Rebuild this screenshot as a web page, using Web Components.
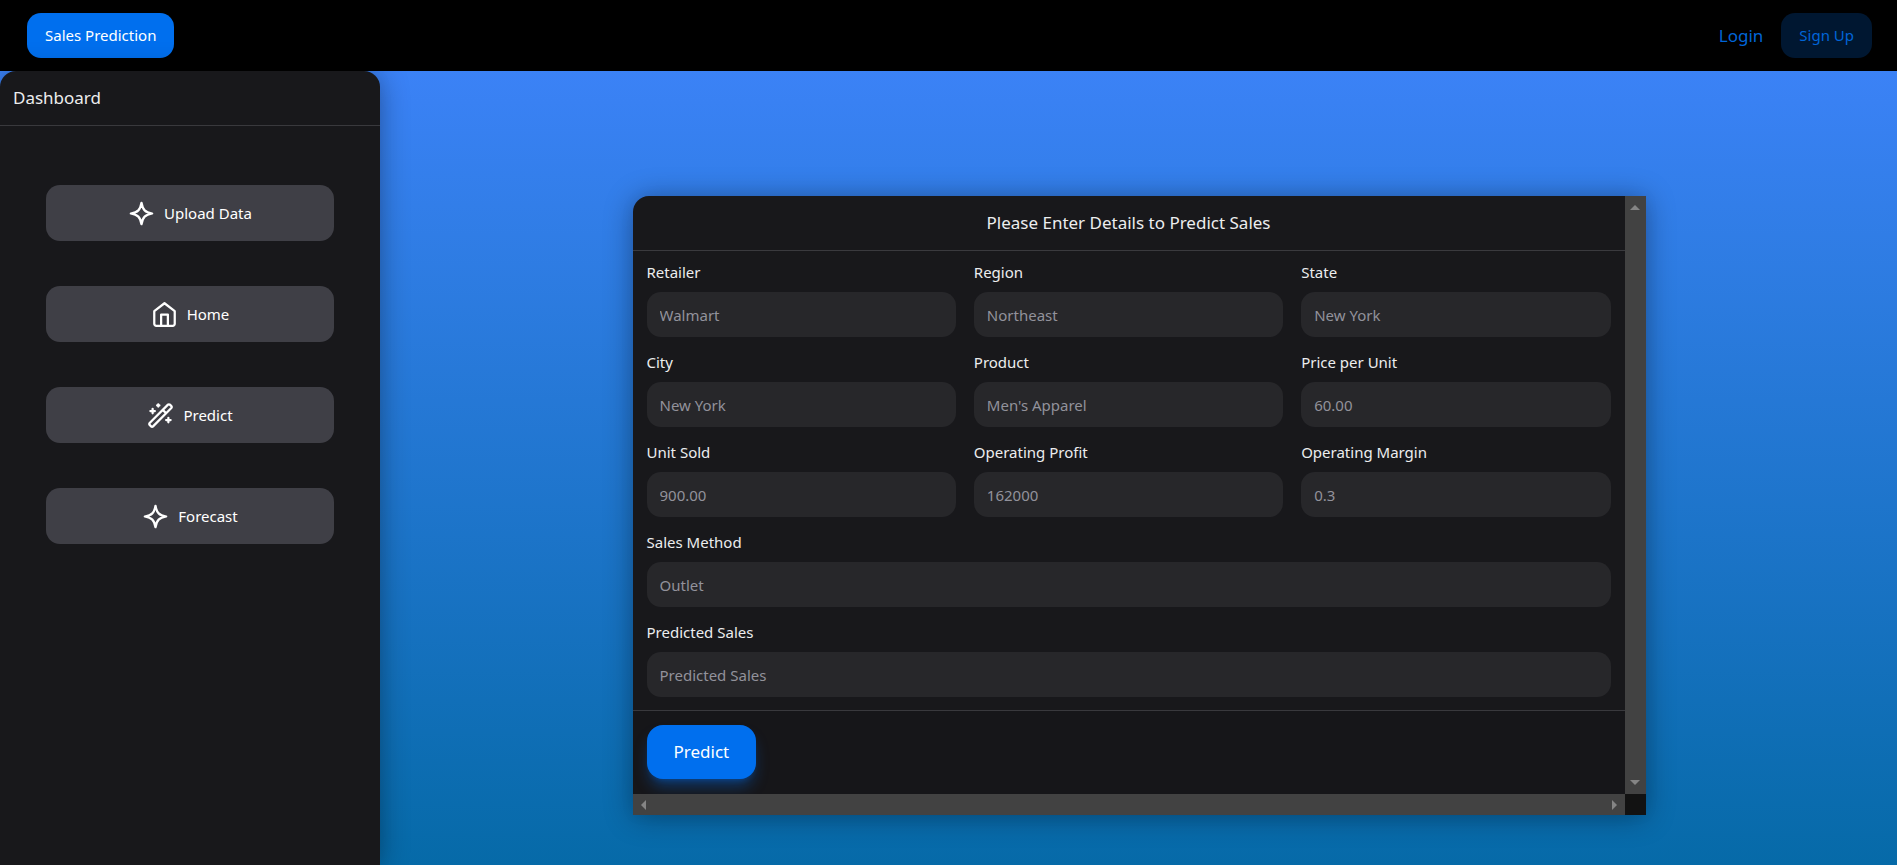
<!DOCTYPE html>
<html lang="en">
<head>
<meta charset="utf-8">
<title>Sales Prediction</title>
<style>
html,body{margin:0;min-height:100vh;background:#000}
body{font-family:"Noto Sans","Open Sans",sans-serif;font-size:15px;line-height:24px;color:#ecedee;display:flex}
sales-app{flex:1}
</style>
</head>
<body>
<sales-app></sales-app>
<script>
const define = (name, html, setup) => {
  const template = document.createElement('template');
  template.innerHTML = '<style>*{box-sizing:border-box}button,input{font:inherit;border:0;margin:0}</style>' + html;
  customElements.define(name, class extends HTMLElement {
    constructor() {
      super();
      this.attachShadow({mode: 'open'}).append(template.content.cloneNode(true));
    }
    connectedCallback() { if (setup) setup(this, this.shadowRoot); }
  });
};

const icons = {
  sparkle: '<path d="M12 2.5c1.100 6.300 3.200 8.400 9.500 9.500-6.300 1.100-8.400 3.200-9.500 9.500-1.100-6.300-3.200-8.400-9.500-9.500 6.300-1.100 8.400-3.200 9.500-9.500z"/>',
  home: '<path d="M2.900 9 12 2l9.100 7v11.200a1.800 1.800 0 0 1-1.800 1.800H4.700a1.800 1.800 0 0 1-1.800-1.800z"/><path d="M9 22v-10h6v10"/>',
  wand: '<path d="m21.640 3.640-1.280-1.280a1.210 1.210 0 0 0-1.720 0L2.360 18.640a1.210 1.210 0 0 0 0 1.720l1.280 1.280a1.200 1.200 0 0 0 1.720 0L21.640 5.360a1.200 1.200 0 0 0 0-1.720M14 7l3 3M5 6v4M19 14v4M10 2v2M7 8H3M21 16h-4M11 3H9"/>'
};

define('app-button', `
<style>
:host{display:block}
button{display:flex;align-items:center;justify-content:center;width:100%;height:45px;padding:0 18px 2px;border-radius:14px;background:#006fee;color:#fff;cursor:pointer}
:host([kind=flat]) button{background:#001731;color:#0065d8}
:host([kind=nav]) button{height:56px;padding-bottom:0;background:#3f3f46;gap:9px}
:host([kind=large]) button{height:54px;padding:0 27px;font-size:17px;border-radius:16px;box-shadow:0 10px 15px -3px #006fee66,0 4px 6px -4px #006fee66}
</style>
<button type="button"><slot name="icon"></slot><slot></slot></button>`);

define('app-icon', `
<style>
:host{display:block;width:27px;height:27px}
svg{display:block;width:100%;height:100%;fill:none;stroke:#fff;stroke-width:2;stroke-linecap:round;stroke-linejoin:round}
</style>
<svg viewBox="0 0 24 24" aria-hidden="true"></svg>`,
(el, root) => { root.querySelector('svg').innerHTML = icons[el.getAttribute('name')]; });

define('app-navbar', `
<style>
:host{display:block;background:#000}
nav{display:flex;align-items:center;height:71px;padding:0 25px 0 27px}
.right{display:flex;align-items:center;gap:18px;margin-left:auto}
a{font-size:17px;color:#0065d8;text-decoration:none}
</style>
<nav>
<app-button>Sales Prediction</app-button>
<div class="right"><a href="#login">Login</a><app-button kind="flat">Sign Up</app-button></div>
</nav>`);

define('app-sidebar', `
<style>
:host{display:block;background:#18181b;border-radius:16px 16px 0 0;box-shadow:0 0 15px #0000000d,0 2px 30px #00000055}
h2{margin:0;padding:13px;height:55px;border-bottom:1px solid #39393d;font-size:17px;line-height:27px;font-weight:400}
nav{display:grid;gap:45px;padding:59px 46px}
</style>
<h2>Dashboard</h2>
<nav>
<app-button kind="nav"><app-icon slot="icon" name="sparkle"></app-icon>Upload Data</app-button>
<app-button kind="nav"><app-icon slot="icon" name="home"></app-icon>Home</app-button>
<app-button kind="nav"><app-icon slot="icon" name="wand"></app-icon>Predict</app-button>
<app-button kind="nav"><app-icon slot="icon" name="sparkle"></app-icon>Forecast</app-button>
</nav>`);

define('form-field', `
<style>
:host{display:block;min-width:0}
:host([wide]){grid-column:1/-1}
label{display:block;height:24px;margin-bottom:8px}
input{display:block;width:100%;height:45px;padding:0 13px;border-radius:14px;background:#27272a;color:#ecedee;outline:0}
input::placeholder{color:#92929b;opacity:1}
</style>
<label for="field"></label><input id="field" type="text">`,
(el, root) => {
  root.querySelector('label').textContent = el.getAttribute('label');
  root.querySelector('input').placeholder = el.getAttribute('hint');
});

define('scroll-track', `
<style>
:host{display:flex;justify-content:space-between;background:#424242}
:host([axis=y]){flex-direction:column;align-items:center;padding:9px 0}
:host([axis=x]){align-items:center;padding:0 8px}
i{border:5px solid transparent}
:host([axis=y]) .a{border-width:0 5px 5px;border-bottom-color:#858585}
:host([axis=y]) .b{border-width:5px 5px 0;border-top-color:#858585}
:host([axis=x]) .a{border-width:5px 5px 5px 0;border-right-color:#858585}
:host([axis=x]) .b{border-width:5px 0 5px 5px;border-left-color:#858585}
</style>
<i class="a"></i><i class="b"></i>`);

define('scroll-panel', `
<style>
:host{display:grid;grid-template-columns:minmax(0,1fr) 21px;grid-template-rows:auto 21px;background:#18181b;border-radius:16px 0 0 0;box-shadow:0 0 15px #0000000d,0 2px 30px #00000055}
.content{min-width:0}
.corner{background:#121212}
</style>
<div class="content"><slot></slot></div>
<scroll-track axis="y"></scroll-track>
<scroll-track axis="x"></scroll-track>
<div class="corner"></div>`);

define('predict-form', `
<style>
:host{display:block}
h1{margin:0;height:55px;padding-top:13px;border-bottom:1px solid #3a3a3e;font-size:17px;line-height:27px;font-weight:400;text-align:center}
.fields{display:grid;grid-template-columns:repeat(3,minmax(0,1fr));gap:13px 18px;padding:9px 14px 13px}
footer{display:flex;padding:14px 14px 15px;border-top:1px solid #39393d;background:#161619}
</style>
<form>
<h1>Please Enter Details to Predict Sales</h1>
<div class="fields">
<form-field label="Retailer" hint="Walmart"></form-field>
<form-field label="Region" hint="Northeast"></form-field>
<form-field label="State" hint="New York"></form-field>
<form-field label="City" hint="New York"></form-field>
<form-field label="Product" hint="Men's Apparel"></form-field>
<form-field label="Price per Unit" hint="60.00"></form-field>
<form-field label="Unit Sold" hint="900.00"></form-field>
<form-field label="Operating Profit" hint="162000"></form-field>
<form-field label="Operating Margin" hint="0.3"></form-field>
<form-field wide label="Sales Method" hint="Outlet"></form-field>
<form-field wide label="Predicted Sales" hint="Predicted Sales"></form-field>
</div>
<footer><app-button kind="large">Predict</app-button></footer>
</form>`);

define('sales-app', `
<style>
:host{display:flex;flex-direction:column;min-width:0}
.page{flex:1;display:grid;grid-template-columns:380px minmax(0,1fr);background:linear-gradient(#3b82f6,#066aa8)}
main{display:flex;justify-content:center;align-items:flex-start;padding:125px 24px 50px 25px}
scroll-panel{width:100%;max-width:1013px}
</style>
<app-navbar></app-navbar>
<div class="page">
<app-sidebar></app-sidebar>
<main><scroll-panel><predict-form></predict-form></scroll-panel></main>
</div>`);
</script>
</body>
</html>
